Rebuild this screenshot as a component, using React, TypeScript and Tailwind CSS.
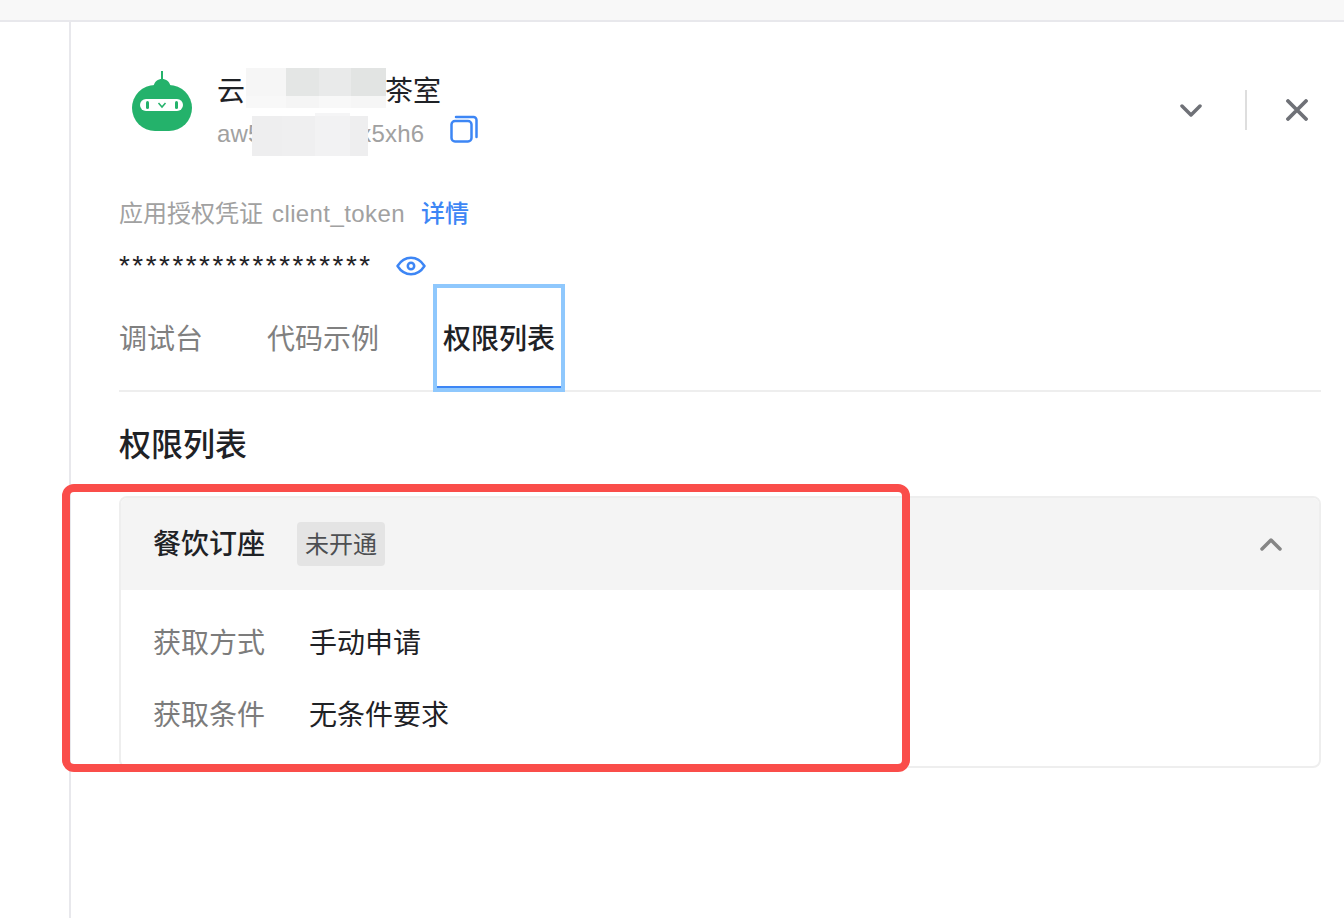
const FONT = "font-['Liberation_Sans','Noto_Sans_CJK_SC',sans-serif]";

function RobotLogo() {
  return (
    <svg width="61" height="61" viewBox="0 0 61 61" className="mt-px shrink-0">
      <rect x="29" y="0" width="2" height="9" fill="#24b26b" />
      <path d="M21.500 15c1-4.500 4.500-7 8.500-7s7.500 2.500 8.500 7z" fill="#24b26b" />
      <rect x="0" y="14" width="60" height="46" rx="23" fill="#24b26b" />
      <rect x="8" y="28" width="43" height="12" rx="6" fill="#fff" />
      <rect x="14" y="30" width="3" height="8" rx="1.500" fill="#24b26b" />
      <rect x="43" y="30" width="3" height="8" rx="1.500" fill="#24b26b" />
      <path d="M26.500 32l3.500 4 3.500-4" fill="none" stroke="#24b26b" strokeWidth="1.500" />
    </svg>
  );
}

function CopyIcon() {
  return (
    <svg width="28" height="28" viewBox="0 0 28 28" fill="none" stroke="#3d86f5" strokeWidth="2.500">
      <rect x="1.500" y="6" width="20" height="20.500" rx="3.500" />
      <path d="M6 2h17.500a3 3 0 0 1 3 3v17" strokeLinecap="round" />
    </svg>
  );
}

function EyeIcon() {
  return (
    <svg width="30" height="20" viewBox="0 0 30 20" fill="none" stroke="#3d86f5" strokeWidth="2.500">
      <path d="M1.500 10C5 4.500 9.500 1.800 15 1.800S25 4.500 28.500 10C25 15.500 20.500 18.200 15 18.200S5 15.500 1.500 10z" strokeLinejoin="round" />
      <circle cx="15" cy="10" r="3.200" />
    </svg>
  );
}

function Chevron({ up, color }: { up?: boolean; color: string }) {
  return (
    <svg width="22" height="13" viewBox="0 0 22 13" fill="none" stroke={color} strokeWidth="3.500" strokeLinecap="round" strokeLinejoin="round">
      <path d={up ? "M2 11l9-9 9 9" : "M2 2l9 9 9-9"} />
    </svg>
  );
}

function CloseIcon() {
  return (
    <svg width="22" height="22" viewBox="0 0 22 22" fill="none" stroke="#6f7177" strokeWidth="3.800" strokeLinecap="round">
      <path d="M2 2l18 18M20 2L2 20" />
    </svg>
  );
}

// 打码的色块
function BlurPatch({ className, cells }: { className: string; cells: string[] }) {
  return (
    <div className={`absolute flex ${className}`}>
      {cells.map((c, i) => (
        <div key={i} className={`h-full ${c}`} />
      ))}
    </div>
  );
}

function InfoRow({ label, value }: { label: string; value: string }) {
  return (
    <div className="flex h-[72px] items-center">
      <span className="w-[156px] text-[28px] text-[#7c7c7c]">{label}</span>
      <span className="text-[28px] text-[#1f2226]">{value}</span>
    </div>
  );
}

export default function App() {
  return (
    <div className={`relative flex h-[918px] w-[1344px] flex-col overflow-hidden bg-white ${FONT}`}>
      <div className="h-[22px] shrink-0 border-b-2 border-[#e8e8ec] bg-[#f8f8f8]" />

      <div className="flex min-h-0 flex-1">
        <div className="w-[71px] shrink-0 border-r-2 border-[#e8e8ec]" />

        <div className="flex-1 pt-[46px] pr-[23px] pl-[48px]">
          {/* Header */}
          <div className="flex items-start justify-between">
            <div className="flex items-start pl-[13px] pt-[2px]">
              <RobotLogo />
              <div className="ml-[24px] flex flex-col">
                <span className="h-[44px] text-[28px] leading-[44px] text-[#1f2226]">云白白白白白茶室</span>
                <div className="mt-[-2px] flex items-center">
                  <span className="text-[24px] leading-[44px] tracking-[0.2px] text-[#a1a1a1]">aw5xxxxxxxxx5xh6</span>
                  <span className="ml-[26px] mt-[-10px]"><CopyIcon /></span>
                </div>
              </div>
            </div>
            <div className="mt-[22px] mr-[13px] flex items-center">
              <Chevron color="#6f7177" />
              <div className="mr-[39px] ml-[43px] h-[40px] w-[2px] bg-[#dedede]" />
              <CloseIcon />
            </div>
          </div>

          {/* Token */}
          <div className="mt-[40px] flex items-center text-[24px] leading-[36px]">
            <span className="text-[#a1a1a1]">应用授权凭证</span>
            <span className="ml-[9px] tracking-[0.4px] text-[#a1a1a1]">client_token</span>
            <span className="ml-[16px] font-medium text-[#3d86f5]">详情</span>
          </div>
          <div className="mt-[14px] flex h-[36px] items-center">
            <span className="pt-[4px] text-[28px] leading-[36px] tracking-[2.45px] text-[#1f2226]">*******************</span>
            <span className="ml-[23px] mt-[4px]"><EyeIcon /></span>
          </div>

          {/* Tabs */}
          <div className="flex h-[110px] items-stretch border-b-2 border-[#eeeeee] pt-[2px] text-[28px]">
            <span className="flex w-[148px] items-center pt-[6px] text-[#808080]">调试台</span>
            <span className="flex w-[166px] items-center pt-[6px] text-[#808080]">代码示例</span>
            <span className="mb-[-2px] flex w-[132px] items-center justify-center border-4 border-[#8fc8fd] pt-[4px] font-medium text-[#1f2226] shadow-[inset_0_-2px_0_#3d86f5]">
              权限列表
            </span>
          </div>

          <h2 className="mt-[30px] text-[32px] leading-[46px] font-medium text-[#1f2226]">权限列表</h2>

          {/* Permission card */}
          <div className="mt-[28px] h-[272px] overflow-hidden rounded-[8px] border-2 border-[#eeeeee]">
            <div className="flex h-[92px] items-center justify-between bg-[#f4f4f4] pr-[37px] pl-[32px]">
              <div className="flex items-center">
                <span className="pt-[2px] text-[28px] font-medium text-[#1f2226]">餐饮订座</span>
                <span className="ml-[32px] flex h-[44px] w-[88px] items-center justify-center rounded-[4px] bg-[#e4e4e4] pt-[2px] text-[24px] text-[#4d4f52]">
                  未开通
                </span>
              </div>
              <Chevron up color="#868686" />
            </div>
            <div className="pt-[18px] pl-[32px]">
              <InfoRow label="获取方式" value="手动申请" />
              <InfoRow label="获取条件" value="无条件要求" />
            </div>
          </div>
        </div>
      </div>

      {/* Redaction patches */}
      <BlurPatch className="left-[246px] top-[68px] h-[40px] w-[140px]" cells={["w-[40px] bg-[#f6f6f6]", "w-[33px] bg-[#e4e6e5]", "w-[32px] bg-[#e9eaea]", "w-[35px] bg-[#e2e4e3]"]} />
      <BlurPatch className="left-[246px] top-[96px] h-[12px] w-[140px]" cells={["w-[40px] bg-[#f8f8f8]", "w-[33px] bg-[#f5f5f5]", "w-[32px] bg-[#f8f8f8]", "w-[35px] bg-[#f6f6f6]"]} />
      <BlurPatch className="left-[252px] top-[116px] h-[40px] w-[116px]" cells={["w-[30px] bg-[#eeeeef]", "w-[33px] bg-[#efeff0]", "w-[35px] bg-[#f2f2f3]", "w-[18px] bg-[#eeeeef]"]} />
      <BlurPatch className="left-[315px] top-[113px] h-[3px] w-[35px]" cells={["w-[35px] bg-[#f5f5f6]"]} />

      {/* Annotation frame */}
      <div className="pointer-events-none absolute left-[62px] top-[484px] h-[288px] w-[848px] rounded-[12px] border-8 border-[#fa4d4a]" />
    </div>
  );
}
